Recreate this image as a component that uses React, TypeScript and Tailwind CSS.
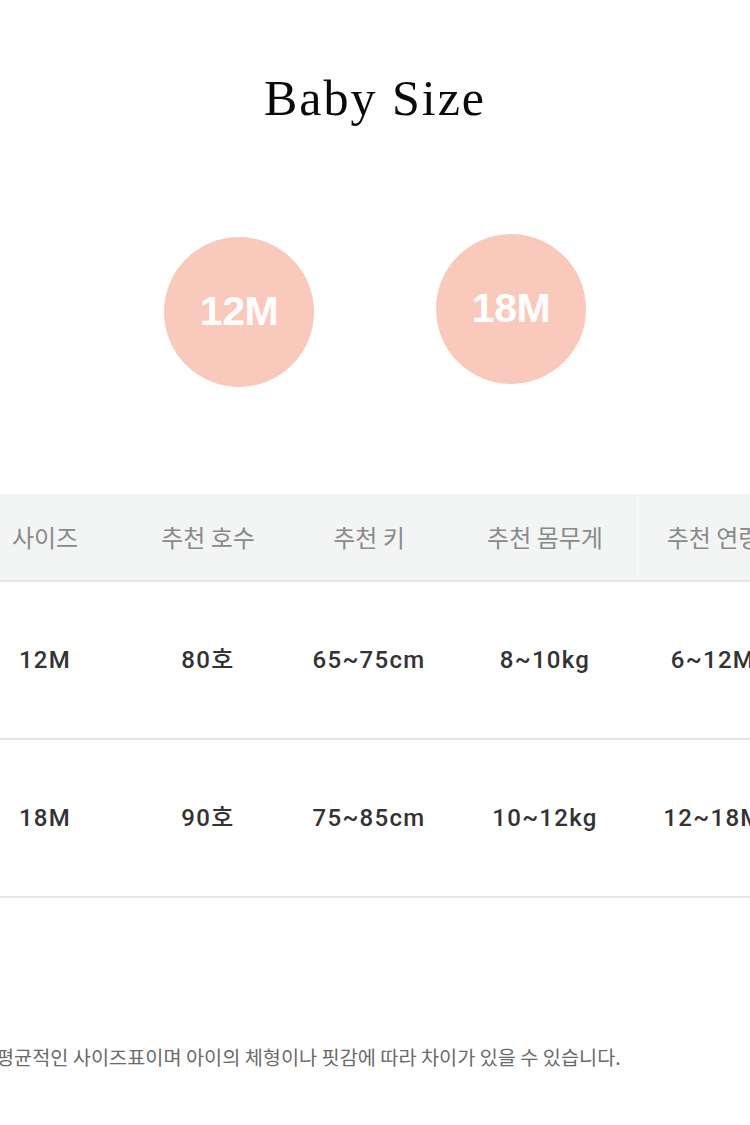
const columns = ["사이즈", "추천 호수", "추천 키", "추천 몸무게", "추천 연령"];

const rows = [
  ["12M", "80호", "65~75cm", "8~10kg", "6~12M"],
  ["18M", "90호", "75~85cm", "10~12kg", "12~18M"],
];

const colWidths = ["w-[172px]", "w-[154px]", "w-[168px]", "w-[184px]", "w-[152px]"];

function SizeCircle({ label, className }: { label: string; className?: string }) {
  return (
    <div
      className={`w-[150px] h-[150px] rounded-full bg-[#f9c9bb] flex items-center justify-center text-white text-[41px] font-bold font-['Liberation_Sans',sans-serif] tracking-[-0.5px] ${className ?? ""}`}
    >
      {label}
    </div>
  );
}

export default function App() {
  return (
    <div className="w-[750px] h-[1125px] overflow-hidden bg-white">
      <h1 className="pt-[73px] text-center text-[50px] leading-none tracking-[2px] text-[#0a0a0a] font-['Liberation_Serif',serif] font-normal">
        Baby Size
      </h1>

      <div className="mt-[111px] flex justify-center gap-[122px]">
        <SizeCircle label="12M" className="mt-[3px]" />
        <SizeCircle label="18M" />
      </div>

      {/* size table - wider than the screen, cut on both sides */}
      <div className="mt-[107px] -ml-[41px] w-[830px]">
        <div className="flex h-[88px] bg-[#f3f5f4] border-b-2 border-[#e4e5e4]">
          {columns.map((col, i) => (
            <div
              key={col}
              className={`${colWidths[i]} shrink-0 flex items-center justify-center text-[24px] text-[#8a8a8a] font-['Noto_Sans_CJK_KR',sans-serif] ${i === 4 ? "border-l border-[#fafbfa]" : ""}`}
            >
              {col}
            </div>
          ))}
        </div>

        {rows.map((row) => (
          <div key={row[0]} className="flex h-[158px] border-b-2 border-[#e6e6e6]">
            {row.map((cell, i) => (
              <div
                key={i}
                className={`${colWidths[i]} shrink-0 flex items-center justify-center text-[24px] font-medium tracking-[1.3px] text-[#333] font-['Roboto','Noto_Sans_CJK_KR',sans-serif]`}
              >
                {cell}
              </div>
            ))}
          </div>
        ))}
      </div>

      <p className="mt-[144px] -ml-[4px] whitespace-nowrap text-[19.7px] text-[#6a6a6a] font-['Noto_Sans_CJK_KR',sans-serif]">
        평균적인 사이즈표이며 아이의 체형이나 핏감에 따라 차이가 있을 수 있습니다.
      </p>
    </div>
  );
}
